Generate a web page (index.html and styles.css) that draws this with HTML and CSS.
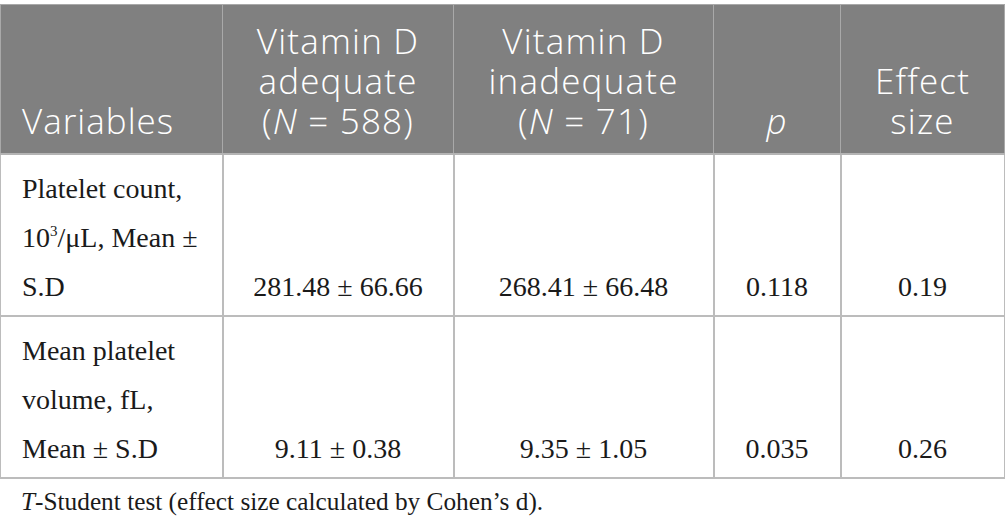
FILE: index.html
```html
<!DOCTYPE html>
<html>
<head>
<meta charset="utf-8">
<link rel="stylesheet" href="styles.css">
</head>
<body>
<div class="wrap">
<table class="data">
  <colgroup>
    <col class="c1"><col class="c2"><col class="c3"><col class="c4"><col class="c5">
  </colgroup>
  <thead>
    <tr>
      <th class="left">Variables</th>
      <th>Vitamin D<br>adequate<br>(<i>N</i> = 588)</th>
      <th>Vitamin D<br>inadequate<br>(<i>N</i> = 71)</th>
      <th><i>p</i></th>
      <th>Effect<br>size</th>
    </tr>
  </thead>
  <tbody>
    <tr>
      <td class="left">Platelet count,<br>10<sup>3</sup>/μL, Mean ±<br>S.D</td>
      <td>281.48 ± 66.66</td>
      <td>268.41 ± 66.48</td>
      <td>0.118</td>
      <td>0.19</td>
    </tr>
    <tr>
      <td class="left">Mean platelet<br>volume, fL,<br>Mean ± S.D</td>
      <td>9.11 ± 0.38</td>
      <td>9.35 ± 1.05</td>
      <td>0.035</td>
      <td>0.26</td>
    </tr>
  </tbody>
</table>
<p class="note"><i>T</i>-Student test (effect size calculated by Cohen’s d).</p>
</div>
</body>
</html>
```

FILE: styles.css
```css
html, body {
  margin: 0;
  padding: 0;
  background: #ffffff;
}
.wrap {
  padding-top: 4px;
}
.data {
  border-collapse: collapse;
  width: 1004px;
  table-layout: fixed;
}
.c1 { width: 222px; }
.c2 { width: 231px; }
.c3 { width: 260px; }
.c4 { width: 127px; }
.c5 { width: 164px; }
.data th {
  background: #808080;
  color: #ffffff;
  font-family: "Open Sans", "Noto Sans", sans-serif;
  font-weight: 300;
  font-size: 35px;
  letter-spacing: 1.2px;
  line-height: 40px;
  text-align: center;
  vertical-align: bottom;
  padding: 16px 4px 12px;
  border: 1px solid #a9a9a9;
  border-bottom: 2px solid #b4b4b4;
}
.data th.left {
  text-align: left;
  padding-left: 21px;
  letter-spacing: 1px;
}
.data td {
  font-family: "Liberation Serif", "Times New Roman", serif;
  font-size: 28px;
  line-height: 49px;
  color: #1a1a1a;
  text-align: center;
  vertical-align: bottom;
  padding: 9px 6px 4px;
  border: 1px solid #bcbcbc;
  border-width: 1px 2px 2px 1px;
}
.data td.left {
  text-align: left;
  padding-left: 21px;
}
.data sup {
  font-size: 15px;
  line-height: 0;
  vertical-align: 11px;
}
.note {
  margin: 6px 0 0 21px;
  font-family: "Liberation Serif", "Times New Roman", serif;
  font-size: 25.3px;
  line-height: 32px;
  color: #1a1a1a;
}
```
